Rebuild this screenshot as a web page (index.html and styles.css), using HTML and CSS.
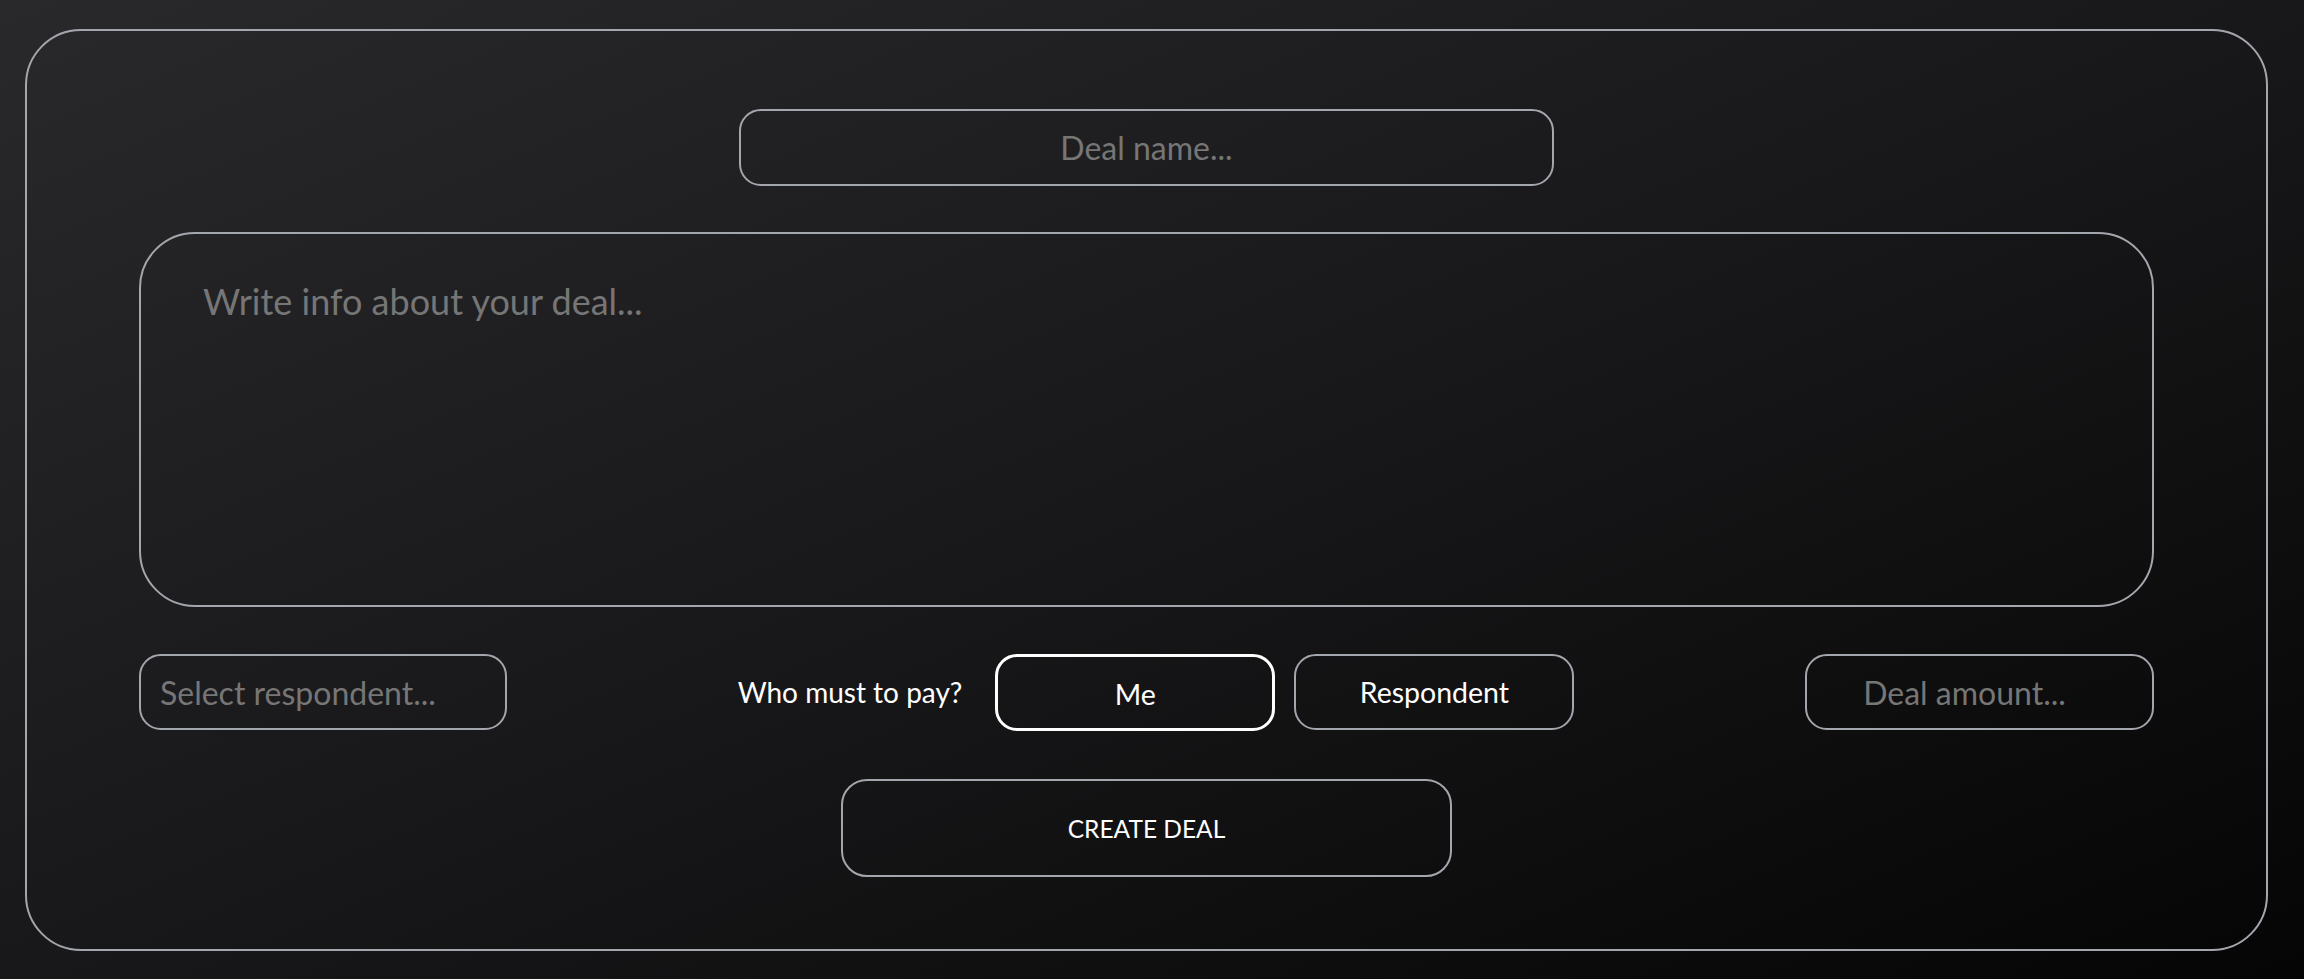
FILE: index.html
```html
<!DOCTYPE html>
<html lang="en">
<head>
     <meta charset="UTF-8">
     <meta name="viewport" content="width=device-width, initial-scale=1.0">
     <title>Create deal</title>
     <link rel="stylesheet" href="styles.css">
</head>
<body>
     <div class="deal-card">
          <form class="deal-form" onSubmit="event.preventDefault()">
               <input class="deal-name" type="text" placeholder="Deal name..."/>
               <textarea class="deal-info" placeholder="Write info about your deal..."></textarea>
               <div class="deal-row">
                    <input class="respondent" type="text" placeholder="Select respondent..."/>
                    <div class="payer">
                         <span class="payer-label">Who must to pay?</span>
                         <button class="payer-btn active" type="button">Me</button>
                         <button class="payer-btn" type="button">Respondent</button>
                    </div>
                    <input class="amount" type="text" placeholder="Deal amount..."/>
               </div>
               <button class="create-btn" type="submit">CREATE DEAL</button>
          </form>
     </div>
</body>
</html>
```

FILE: styles.css
```css
*{
     box-sizing: border-box;
}
body{
     margin: 0;
     height: 100vh;
     background: linear-gradient(to bottom right, #29292b 0%, #18181a 50%, #050505 100%);
     font-family: Lato, "Open Sans", sans-serif;
     overflow: hidden;
}
.deal-card{
     height: 922px;
     margin: 29px 36px 0 25px;
     border: 2px solid #a4a6ad;
     border-radius: 56px;
}
.deal-form{
     display: flex;
     flex-direction: column;
     align-items: center;
     padding: 78px 112px 0 112px;
}
input,textarea,button{
     font-family: Lato, "Open Sans", sans-serif;
     background: transparent;
     color: #ffffff;
     outline: none;
     border: 2px solid #a4a6ad;
}
input::placeholder,textarea::placeholder{
     color: #767676;
}
.deal-name{
     width: 815px;
     height: 77px;
     border-radius: 22px;
     font-size: 32px;
     text-align: center;
     margin-bottom: 46px;
}
.deal-info{
     width: 100%;
     height: 375px;
     border-radius: 56px;
     font-size: 36px;
     padding: 45px 62px;
     resize: none;
     margin-bottom: 47px;
}
.deal-row{
     width: 100%;
     height: 76px;
     display: flex;
     justify-content: space-between;
     align-items: center;
     margin-bottom: 49px;
}
.respondent,.amount{
     height: 76px;
     border-radius: 22px;
     font-size: 32px;
}
.respondent{
     width: 368px;
     padding: 0 19px;
}
.amount{
     width: 349px;
     text-align: center;
     padding: 0 30px 0 0;
}
.payer{
     display: flex;
     align-items: center;
}
.payer-label{
     color: #ffffff;
     font-size: 28px;
     margin-right: 33px;
}
.payer-btn{
     width: 280px;
     height: 76px;
     border-radius: 22px;
     font-size: 28.5px;
     margin-right: 19px;
}
.payer-btn:last-child{
     margin-right: 0;
}
.payer-btn.active{
     border: 3px solid #ffffff;
     height: 77px;
     padding-top: 4px;
}
.create-btn{
     width: 611px;
     height: 98px;
     border-radius: 26px;
     font-size: 24.5px;
}
```
